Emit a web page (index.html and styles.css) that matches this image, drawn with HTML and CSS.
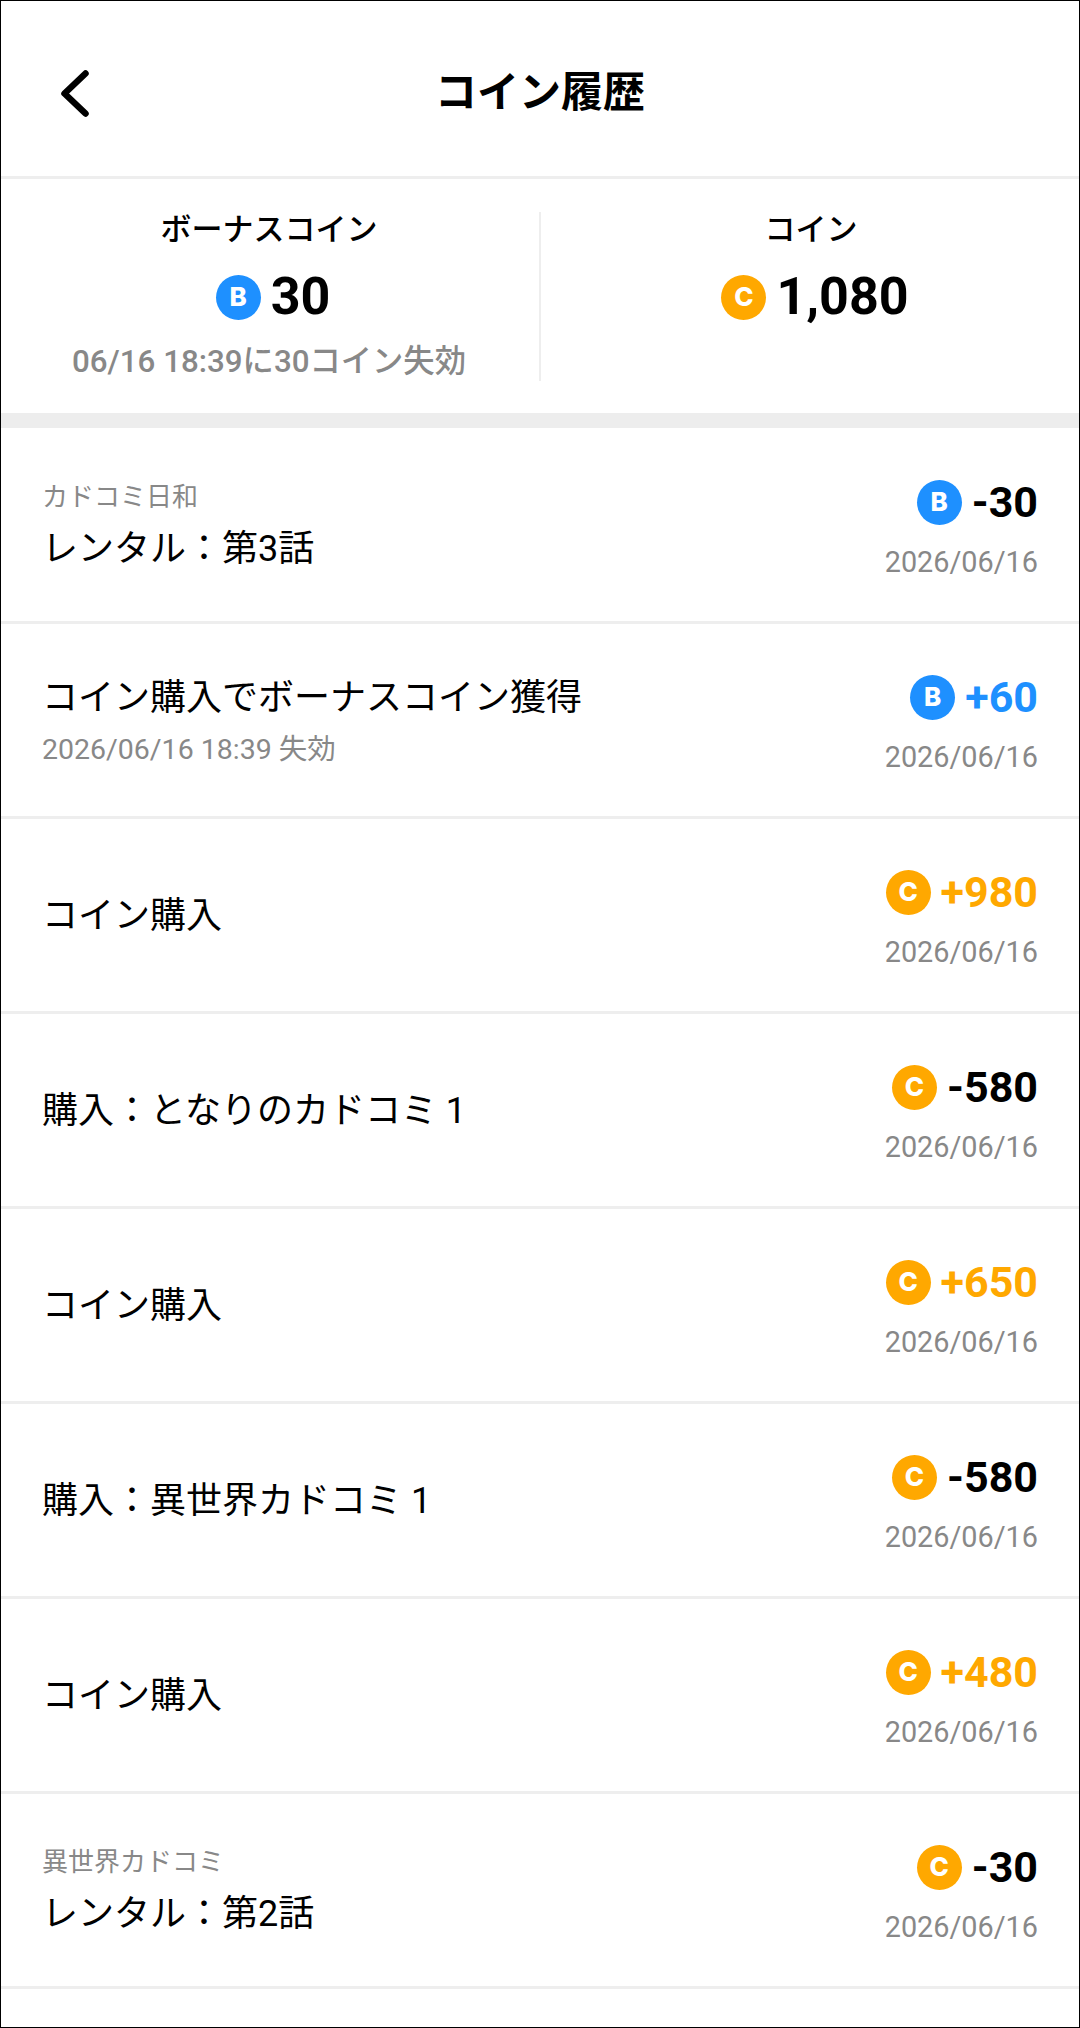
FILE: index.html
```html
<!DOCTYPE html>
<html lang="ja">
<head>
<meta charset="utf-8">
<title>コイン履歴</title>
<link rel="stylesheet" href="styles.css">
</head>
<body>
<div class="page">
  <header class="top">
    <svg class="back" width="36" height="54" viewBox="0 0 36 54"><path d="M28.500 6.500 L7.500 26.500 L28.500 46.500" fill="none" stroke="#000" stroke-width="6.500" stroke-linecap="round" stroke-linejoin="round"/></svg>
    <h1 class="title">コイン履歴</h1>
  </header>
  <section class="summary">
    <div class="cell">
      <div class="cell-label">ボーナスコイン</div>
      <div class="cell-value"><span class="coin blue">B</span><span>30</span></div>
      <div class="cell-note">06/16 18:39に30コイン失効</div>
    </div>
    <div class="cell">
      <div class="cell-label">コイン</div>
      <div class="cell-value"><span class="coin gold">C</span><span>1,080</span></div>
    </div>
  </section>
  <div class="gap"></div>
  <ul class="list">
    <li class="row"><div class="info"><div class="small">カドコミ日和</div><div class="name">レンタル：第3話</div></div><div class="amt"><div class="num"><span class="coin blue">B</span><span>-30</span></div><div class="date">2026/06/16</div></div></li>
    <li class="row"><div class="info"><div class="name">コイン購入でボーナスコイン獲得</div><div class="small low">2026/06/16 18:39 失効</div></div><div class="amt"><div class="num c-blue"><span class="coin blue">B</span><span>+60</span></div><div class="date">2026/06/16</div></div></li>
    <li class="row"><div class="info"><div class="name">コイン購入</div></div><div class="amt"><div class="num c-gold"><span class="coin gold">C</span><span>+980</span></div><div class="date">2026/06/16</div></div></li>
    <li class="row"><div class="info"><div class="name">購入：となりのカドコミ 1</div></div><div class="amt"><div class="num"><span class="coin gold">C</span><span>-580</span></div><div class="date">2026/06/16</div></div></li>
    <li class="row"><div class="info"><div class="name">コイン購入</div></div><div class="amt"><div class="num c-gold"><span class="coin gold">C</span><span>+650</span></div><div class="date">2026/06/16</div></div></li>
    <li class="row"><div class="info"><div class="name">購入：異世界カドコミ 1</div></div><div class="amt"><div class="num"><span class="coin gold">C</span><span>-580</span></div><div class="date">2026/06/16</div></div></li>
    <li class="row"><div class="info"><div class="name">コイン購入</div></div><div class="amt"><div class="num c-gold"><span class="coin gold">C</span><span>+480</span></div><div class="date">2026/06/16</div></div></li>
    <li class="row"><div class="info"><div class="small">異世界カドコミ</div><div class="name">レンタル：第2話</div></div><div class="amt"><div class="num"><span class="coin gold">C</span><span>-30</span></div><div class="date">2026/06/16</div></div></li>
  </ul>
</div>
</body>
</html>
```
FILE: styles.css
```css
* { box-sizing: border-box; }
html, body { margin: 0; padding: 0; background: #fff; }
body { font-family: Roboto, "Noto Sans CJK JP", sans-serif; color: #000; }
.page { width: 1080px; height: 2028px; border: 1px solid #000; overflow: hidden; }
.top { height: 178px; position: relative; display: flex; align-items: center; justify-content: center; border-bottom: 3px solid #eee; padding-top: 8px; }
.back { position: absolute; left: 56px; top: 66px; }
.title { margin: 0; font-size: 42px; font-weight: 700; line-height: 48px; }
.summary { height: 234px; display: flex; align-items: flex-start; padding-top: 33px; }
.cell { flex: 1; height: 169px; display: flex; flex-direction: column; align-items: center; }
.cell:first-child { border-right: 2px solid #eee; padding-right: 2px; }
.cell:last-child { padding-left: 2px; }
.cell-label { font-size: 31px; font-weight: 500; line-height: 38px; margin-top: -1px; }
.cell-value { display: flex; align-items: center; gap: 10px; font-size: 52px; font-weight: 700; line-height: 62px; margin-top: 17px; padding-left: 8px; }
.cell-note { font-size: 31.300px; font-weight: 500; line-height: 36px; color: #888; margin-top: 16px; }
.gap { height: 15px; background: #ededed; }
.list { list-style: none; margin: 0; padding: 1px 0 0; }
.row { height: 195px; border-bottom: 3px solid #eee; display: flex; align-items: center; justify-content: space-between; padding: 0 41px; }
.info { display: flex; flex-direction: column; gap: 10px; padding-top: 1px; }
.name { font-size: 36px; line-height: 48px; }
.small { font-size: 26px; line-height: 36px; color: #888; }
.low { font-size: 28.500px; }
.amt { display: flex; flex-direction: column; align-items: flex-end; }
.num { display: flex; align-items: center; gap: 10px; font-size: 43px; font-weight: 700; line-height: 52px; margin-top: 5px; }
.date { font-size: 28.800px; line-height: 34px; color: #888; margin-top: 17px; }
.c-blue { color: #1e90ff; }
.c-gold { color: #ffa800; }
.coin { width: 45px; height: 45px; border-radius: 50%; display: flex; align-items: center; justify-content: center; color: #fff; font-family: Inter, Roboto, sans-serif; font-size: 26px; font-weight: 800; line-height: 1; flex: none; }
.blue { background: #1e90ff; }
.gold { background: #ffa800; }
```
